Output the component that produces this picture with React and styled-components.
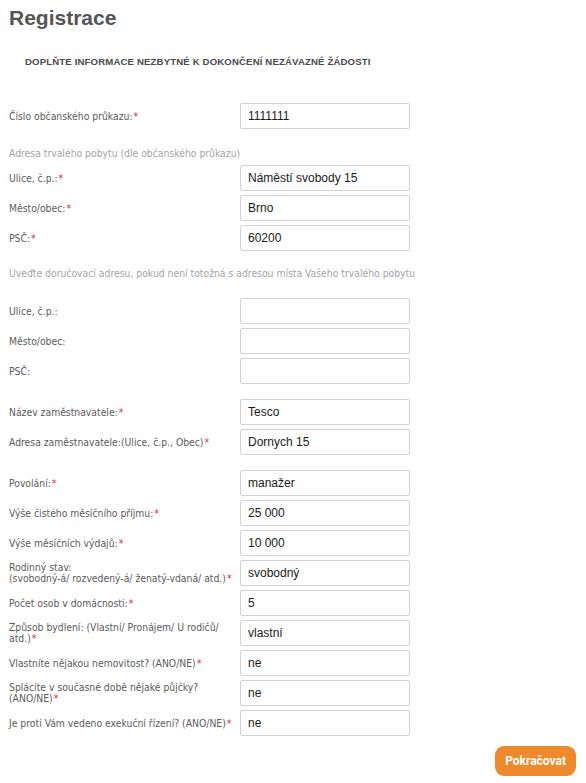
import React, { useEffect, useRef } from 'react';
import styled, { createGlobalStyle } from 'styled-components';

const GlobalStyle = createGlobalStyle`
  html, body {
    margin: 0;
    padding: 0;
    background: #fff;
  }
`;

const sections = [
  {
    rows: [{ label: 'Číslo občanského průkazu:', value: '1111111', required: true }],
  },
  {
    note: 'Adresa trvalého pobytu (dle občanského průkazu)',
    noteTop: 13,
    noteBottom: 5,
    rows: [
      { label: 'Ulice, č.p.:', value: 'Náměstí svobody 15', required: true },
      { label: 'Město/obec:', value: 'Brno', required: true },
      { label: 'PSČ:', value: '60200', required: true },
    ],
  },
  {
    note: 'Uveďte doručovací adresu, pokud není totožná s adresou místa Vašeho trvalého pobytu',
    noteTop: 11,
    noteBottom: 18,
    rows: [
      { label: 'Ulice, č.p.:', value: '' },
      { label: 'Město/obec:', value: '' },
      { label: 'PSČ:', value: '' },
    ],
  },
  {
    gap: 11,
    rows: [
      { label: 'Název zaměstnavatele:', value: 'Tesco', required: true },
      { label: 'Adresa zaměstnavatele:(Ulice, č.p., Obec)', value: 'Dornych 15', required: true },
    ],
  },
  {
    gap: 11,
    rows: [
      { label: 'Povolání:', value: 'manažer', required: true },
      { label: 'Výše čistého měsíčního příjmu:', value: '25 000', required: true },
      { label: 'Výše měsíčních výdajů:', value: '10 000', required: true },
      { label: ['Rodinný stav:', '(svobodný-á/ rozvedený-á/ ženatý-vdaná/ atd.)'], value: 'svobodný', required: true },
      { label: 'Počet osob v domácnosti:', value: '5', required: true },
      { label: ['Způsob bydlení: (Vlastní/ Pronájem/ U rodičů/', 'atd.)'], value: 'vlastní', required: true },
      { label: 'Vlastníte nějakou nemovitost? (ANO/NE)', value: 'ne', required: true },
      { label: ['Splácíte v současné době nějaké půjčky?', '(ANO/NE)'], value: 'ne', required: true },
      { label: 'Je proti Vám vedeno exekuční řízení? (ANO/NE)', value: 'ne', required: true, focus: true },
    ],
  },
];

const Field = ({ value, focus }) => {
  const ref = useRef(null);
  useEffect(() => {
    if (focus && ref.current) {
      ref.current.focus();
      const len = ref.current.value.length;
      ref.current.setSelectionRange(len, len);
    }
  }, [focus]);
  return <Input ref={ref} type="text" defaultValue={value} />;
};

const App = () => {
  return (
    <Page>
      <GlobalStyle />
      <Title>Registrace</Title>
      <Subtitle>Doplňte informace nezbytné k dokončení nezávazné žádosti</Subtitle>
      <Form>
        {sections.map((section, si) => (
          <Section key={si} $gap={section.gap || 0}>
            {section.note && (
              <Note $top={section.noteTop} $bottom={section.noteBottom}>
                {section.note}
              </Note>
            )}
            {section.rows.map((row, ri) => (
              <Row key={ri}>
                <Label>
                  {Array.isArray(row.label)
                    ? row.label.map((line, li) => (
                        <React.Fragment key={li}>
                          {li > 0 && <br />}
                          {line}
                        </React.Fragment>
                      ))
                    : row.label}
                  {row.required && <Star>*</Star>}
                </Label>
                <Field value={row.value} focus={row.focus} />
              </Row>
            ))}
          </Section>
        ))}
      </Form>
      <Footer>
        <Button>Pokračovat</Button>
      </Footer>
    </Page>
  );
};

export default App;

const Page = styled.div`
  width: 586px;
  box-sizing: border-box;
  padding: 5px 8px 0 9px;
`;

const Title = styled.h1`
  margin: 0;
  font-family: 'Liberation Sans', Arial, sans-serif;
  font-size: 21px;
  line-height: 26px;
  font-weight: bold;
  color: #555;
`;

const Subtitle = styled.h2`
  margin: 24px 0 0 16px;
  font-family: 'Liberation Sans', Arial, sans-serif;
  font-size: 9.6px;
  line-height: 14px;
  font-weight: bold;
  letter-spacing: 0.15px;
  text-transform: uppercase;
  color: #4a4a4a;
`;

const Form = styled.div`
  margin-top: 34px;
  display: flex;
  flex-direction: column;
`;

const Section = styled.div`
  display: flex;
  flex-direction: column;
  margin-top: ${p => p.$gap}px;
`;

const Note = styled.div`
  margin: ${p => p.$top}px 0 ${p => p.$bottom}px;
  font-family: 'DejaVu Sans Condensed', 'DejaVu Sans', sans-serif;
  font-size: 10.3px;
  line-height: 14px;
  color: #a3a3a3;
`;

const Row = styled.div`
  display: grid;
  grid-template-columns: 231px 170px;
  align-items: center;
  height: 26px;
  margin-bottom: 4px;
`;

const Label = styled.div`
  font-family: 'DejaVu Sans Condensed', 'DejaVu Sans', sans-serif;
  font-size: 10.3px;
  line-height: 11px;
  color: #5a5a5a;
`;

const Star = styled.span`
  color: #d0303a;
  margin-left: 1px;
`;

const Input = styled.input`
  box-sizing: border-box;
  width: 170px;
  height: 26px;
  padding: 0 7px;
  border: 1px solid #d2d2d2;
  border-radius: 2px;
  background: #fff;
  font-family: 'Liberation Sans', Arial, sans-serif;
  font-size: 12px;
  color: #1a1a1a;
  caret-color: #000;
  outline: none;
`;

const Footer = styled.div`
  display: flex;
  justify-content: flex-end;
  margin-top: 6px;
  padding-right: 2px;
`;

const Button = styled.button`
  height: 30px;
  padding: 0 10px;
  border: none;
  border-radius: 9px;
  background: #ef8a2c;
  color: #fff;
  font-family: Roboto, 'Liberation Sans', sans-serif;
  font-size: 12px;
  font-weight: bold;
  cursor: pointer;
`;
